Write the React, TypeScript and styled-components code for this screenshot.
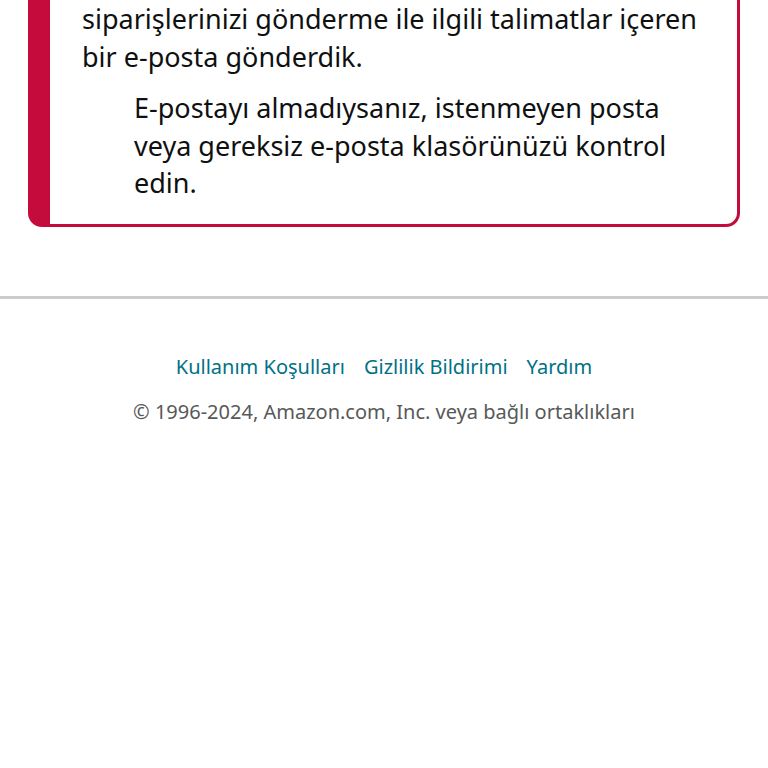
import React from 'react'
import styled, { createGlobalStyle } from 'styled-components'

const GlobalStyle = createGlobalStyle`
  html, body {
    margin: 0;
    padding: 0;
    background: #fff;
    font-family: "Noto Sans", "DejaVu Sans", sans-serif;
    color: #0f1111;
  }
`

const Page = styled.div`
  width: 768px;
  overflow: hidden;
`

const Content = styled.div`
  padding: 0 28px;
  margin-top: -15px;
`

const AlertBox = styled.div`
  border: 3px solid #c40b3b;
  border-left: 22px solid #c40b3b;
  border-radius: 14px;
  padding: 12px 30px 22px 32px;
`

const Message = styled.p`
  margin: 0;
  font-size: 27px;
  line-height: 38px;
`

const Note = styled.p<{ $indent?: number }>`
  margin: 13px 0 0 ${p => p.$indent ?? 52}px;
  font-size: 27px;
  line-height: 37.5px;
`

const Divider = styled.hr`
  border: none;
  border-top: 3px solid #cccccc;
  margin: 69px 0 0;
`

const Footer = styled.footer`
  display: flex;
  flex-direction: column;
  align-items: center;
  padding-top: 54px;
  gap: 18px;
`

const LinkRow = styled.nav`
  display: flex;
  gap: 19px;
`

const FooterLink = styled.a`
  color: #007185;
  font-size: 20px;
  line-height: 27px;
  text-decoration: none;
`

const Copyright = styled.div`
  color: #565959;
  font-size: 20px;
  line-height: 27px;
`

export default function App() {
  return (
    <Page>
      <GlobalStyle />
      <Content>
        <AlertBox>
          <Message>
            siparişlerinizi gönderme ile ilgili talimatlar içeren bir e-posta gönderdik.
          </Message>
          <Note>
            E-postayı almadıysanız, istenmeyen posta veya gereksiz e-posta klasörünüzü kontrol edin.
          </Note>
        </AlertBox>
      </Content>
      <Divider />
      <Footer>
        <LinkRow>
          <FooterLink href="#">Kullanım Koşulları</FooterLink>
          <FooterLink href="#">Gizlilik Bildirimi</FooterLink>
          <FooterLink href="#">Yardım</FooterLink>
        </LinkRow>
        <Copyright>© 1996-2024, Amazon.com, Inc. veya bağlı ortaklıkları</Copyright>
      </Footer>
    </Page>
  )
}
